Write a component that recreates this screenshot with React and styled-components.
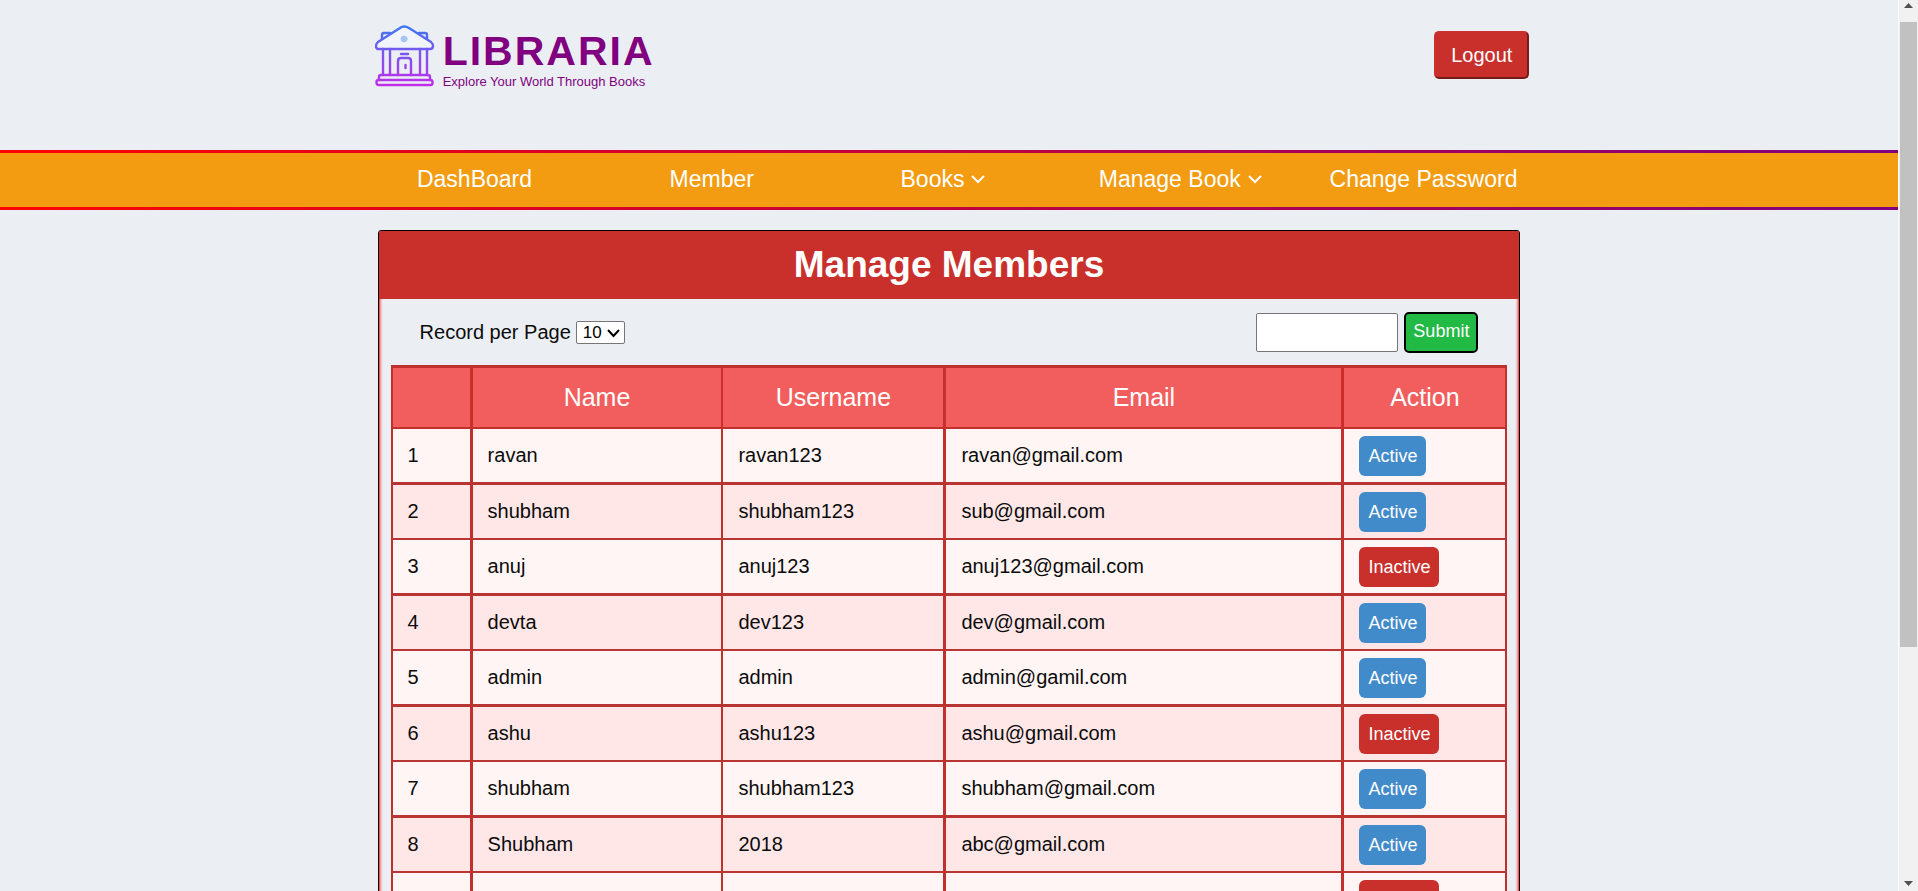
import React from "react";
import styled, { createGlobalStyle } from "styled-components";

const Global = createGlobalStyle`
  * { box-sizing: border-box; }
  body {
    margin: 0;
    background: #ebeff4;
    color: #0b0b0b;
    font-family: "Liberation Sans", Arial, sans-serif;
    font-size: 20px;
    line-height: 24px;
  }
`;

const Shell = styled.div`
  display: flex;
  height: 100vh;
  overflow: hidden;
`;

const Page = styled.div`
  flex: 1;
  min-width: 0;
  overflow: hidden;
`;

const Header = styled.header`
  display: flex;
  justify-content: space-between;
  align-items: flex-start;
  width: 62%;
  min-height: 150px;
  margin: 0 auto;
  padding: 25px 8px 0 14px;
`;

const Brand = styled.a`
  display: flex;
  gap: 8px;
  color: #800080;
  text-decoration: none;
`;

const BrandIcon = styled.svg`
  width: 60px;
  height: 62px;
`;

const BrandText = styled.div`
  display: flex;
  flex-direction: column;
  padding-top: 4px;
`;

const BrandName = styled.span`
  font-size: 41px;
  font-weight: bold;
  line-height: 45px;
  letter-spacing: 2px;
`;

const Tagline = styled.span`
  font-size: 13px;
  line-height: 16px;
`;

const Logout = styled.button`
  height: 48px;
  margin-top: 6px;
  padding: 0 15px;
  border: 2px outset #c9302c;
  border-radius: 5px;
  background: #c9302c;
  color: #fff;
  font: 20px "Liberation Sans", Arial, sans-serif;
`;

const NavBar = styled.nav`
  border: solid;
  border-width: 3px 0;
  border-image: linear-gradient(to right, red, purple) 1;
  background: #f39c12;
`;

const NavList = styled.ul`
  display: grid;
  grid-template-columns: repeat(5, 1fr);
  width: 62.5%;
  margin: 0 auto;
  padding: 0;
  list-style: none;
`;

const NavLink = styled.a`
  display: flex;
  align-items: center;
  justify-content: center;
  gap: 7px;
  height: 54px;
  padding-right: ${(p) => (p.$menu ? "12px" : "0")};
  padding-bottom: 2px;
  color: #fff;
  font-size: 23px;
  text-decoration: none;
  white-space: nowrap;
`;

const Chevron = styled.svg`
  width: 14px;
  height: 14px;
`;

const Card = styled.main`
  box-sizing: content-box;
  width: 60%;
  margin: 20px auto;
  padding: 0 1px;
  border: 1px solid #000;
  border-radius: 3px;
  box-shadow: inset 0 0 3px 1px red;
`;

const Title = styled.h1`
  margin: 0 -1px;
  padding: 12px 0;
  border-radius: 2px 2px 0 0;
  background: #c9302c;
  color: #fff;
  font-size: 37px;
  line-height: 44px;
  text-align: center;
`;

const Toolbar = styled.div`
  display: flex;
  justify-content: space-between;
  align-items: center;
  height: 66px;
  padding: 0 40px;
`;

const PageSize = styled.label`
  display: flex;
  align-items: center;
  gap: 5px;
`;

const SelectBox = styled.span`
  position: relative;
  display: flex;
`;

const Select = styled.select`
  appearance: none;
  width: 49px;
  height: 23px;
  padding: 0 18px 0 6px;
  border: 1px solid #767676;
  border-radius: 2px;
  background: #fff;
  color: #000;
  font: 17px "Liberation Sans", Arial, sans-serif;
`;

const SelectArrow = styled.svg`
  position: absolute;
  top: 6px;
  right: 5px;
  width: 13px;
  height: 12px;
  pointer-events: none;
`;

const Search = styled.form`
  display: flex;
  align-items: center;
  gap: 6px;
`;

const SearchInput = styled.input`
  width: 142px;
  height: 39px;
  padding: 0 8px;
  border: 1px solid #767676;
  border-radius: 2px;
  background: #fff;
  font: 18px "Liberation Sans", Arial, sans-serif;
`;

const Submit = styled.button`
  height: 41px;
  padding: 0 7px 1px;
  border: 2px solid #000;
  border-radius: 5px;
  background: #20ba44;
  color: #fff;
  font: 18px "Liberation Sans", Arial, sans-serif;
`;

const TableArea = styled.div`
  padding: 0 11px 12px;
`;

const Table = styled.table`
  width: 100%;
  table-layout: fixed;
  border-spacing: 0;
  border-top: 3px solid #c0302c;
  border-left: 2px solid #c0302c;
`;

const Th = styled.th`
  width: ${(p) => p.$width};
  height: 61px;
  padding: 0 0 2px;
  border-right: ${(p) => p.$edge}px solid #c9302c;
  border-bottom: 2px solid #c0302c;
  background: #f25e5e;
  color: #fff;
  font-size: 25px;
  font-weight: normal;
`;

const Row = styled.tr`
  background: #fff5f4;
  > td { border-bottom: 3px solid #b93531; }
  &:nth-child(even) { background: #ffe7e7; }
  &:nth-child(even) > td { border-bottom-width: 2px; }
`;

const Td = styled.td`
  padding: 6px 15px 8px;
  border-right: ${(p) => p.$edge}px solid #c0302c;
`;

const ActionTd = styled(Td)`
  padding: 7px 15px 6px;
`;

const Status = styled.button`
  display: block;
  height: 40px;
  padding: 0 9px;
  border: 0;
  border-radius: 6px;
  background: ${(p) => (p.$active ? "#428bca" : "#c9302c")};
  color: #fff;
  font: 18px "Liberation Sans", Arial, sans-serif;
`;

const ScrollTrack = styled.div`
  display: flex;
  flex-direction: column;
  align-items: center;
  width: 20px;
  padding: 0 1px;
  border-left: 1px solid #fafafa;
  background: #f1f1f1;
`;

const ScrollArrow = styled.svg`
  width: 17px;
  height: 22px;
  fill: #505050;
`;

const ScrollThumb = styled.div`
  flex: 625;
  align-self: stretch;
  background: #c1c1c1;
`;

const ScrollRest = styled.div`
  flex: 222;
`;

const links = [
  { label: "DashBoard" },
  { label: "Member" },
  { label: "Books", menu: true },
  { label: "Manage Book", menu: true },
  { label: "Change Password" },
];

const columns = [
  { label: "", width: "80px", edge: 3 },
  { label: "Name", width: "22.5%", edge: 2 },
  { label: "Username", width: "20%", edge: 3 },
  { label: "Email", width: "auto", edge: 3 },
  { label: "Action", width: "163px", edge: 2 },
];

const members = [
  ["ravan", "ravan123", "ravan@gmail.com", true],
  ["shubham", "shubham123", "sub@gmail.com", true],
  ["anuj", "anuj123", "anuj123@gmail.com", false],
  ["devta", "dev123", "dev@gmail.com", true],
  ["admin", "admin", "admin@gamil.com", true],
  ["ashu", "ashu123", "ashu@gmail.com", false],
  ["shubham", "shubham123", "shubham@gmail.com", true],
  ["Shubham", "2018", "abc@gmail.com", true],
  ["", "", "", false],
];

function LibraryIcon() {
  return (
    <BrandIcon viewBox="0 0 60 62" fill="none" stroke="url(#brand)" strokeWidth="2.4" strokeLinejoin="round" strokeLinecap="round" aria-hidden="true">
      <defs>
        <linearGradient id="brand" gradientUnits="userSpaceOnUse" x1="0" y1="0" x2="0" y2="62">
          <stop offset="0" stopColor="#3b78f0" />
          <stop offset="0.5" stopColor="#8152f0" />
          <stop offset="1" stopColor="#c42be8" />
        </linearGradient>
      </defs>
      <path d="M15 8H9Q7 8 7 10V15M44 8H50Q52 8 52 10V15" />
      <path d="M25 3Q29 0 34 3L56 17Q58 19 58 21Q58 24 55 24H4Q1 24 1 21Q1 19 3 17Z" fill="#f1f5fb" />
      <circle cx="29" cy="14" r="3" fill="#a9c5f5" stroke="#a9c5f5" strokeWidth="1" />
      <path d="M8 24V50M15 24V50M45 24V50M52 24V50" />
      <path d="M26 29H33M23 50V36Q23 33 26 33H33Q36 33 36 36V50" />
      <path d="M30.500 40V43" />
      <path d="M4 55V52Q4 50 6 50H53Q55 50 55 52V55" />
      <rect x="1.500" y="55" width="56" height="5" rx="2" />
    </BrandIcon>
  );
}

export default function App() {
  return (
    <Shell>
      <Global />
      <Page>
        <Header>
          <Brand href="#">
            <LibraryIcon />
            <BrandText>
              <BrandName>LIBRARIA</BrandName>
              <Tagline>Explore Your World Through Books</Tagline>
            </BrandText>
          </Brand>
          <Logout type="button">Logout</Logout>
        </Header>
        <NavBar>
          <NavList>
            {links.map((l) => (
              <li key={l.label}>
                <NavLink href="#" $menu={l.menu}>
                  {l.label}
                  {l.menu && (
                    <Chevron viewBox="0 0 14 14" fill="none" stroke="#fff" strokeWidth="2" aria-hidden="true">
                      <path d="M1 4L7 10L13 4" />
                    </Chevron>
                  )}
                </NavLink>
              </li>
            ))}
          </NavList>
        </NavBar>
        <Card>
          <Title>Manage Members</Title>
          <Toolbar>
            <PageSize>
              Record per Page
              <SelectBox>
                <Select defaultValue="10">
                  <option>10</option>
                  <option>25</option>
                  <option>50</option>
                </Select>
                <SelectArrow viewBox="0 0 13 12" fill="none" stroke="#000" strokeWidth="2" aria-hidden="true">
                  <path d="M1 3L6.500 9L12 3" />
                </SelectArrow>
              </SelectBox>
            </PageSize>
            <Search onSubmit={(e) => e.preventDefault()}>
              <SearchInput type="text" aria-label="Search members" />
              <Submit type="submit">Submit</Submit>
            </Search>
          </Toolbar>
          <TableArea>
            <Table>
              <thead>
                <tr>
                  {columns.map((c) => (
                    <Th key={c.label} $width={c.width} $edge={c.edge} scope="col">{c.label}</Th>
                  ))}
                </tr>
              </thead>
              <tbody>
                {members.map(([name, user, email, active], i) => (
                  <Row key={i}>
                    <Td $edge={3}>{i + 1}</Td>
                    <Td $edge={2}>{name}</Td>
                    <Td $edge={3}>{user}</Td>
                    <Td $edge={3}>{email}</Td>
                    <ActionTd $edge={2}>
                      <Status type="button" $active={active}>{active ? "Active" : "Inactive"}</Status>
                    </ActionTd>
                  </Row>
                ))}
              </tbody>
            </Table>
          </TableArea>
        </Card>
      </Page>
      <ScrollTrack aria-hidden="true">
        <ScrollArrow viewBox="0 0 17 22"><path d="M4 8L8.500 3L13 8Z" /></ScrollArrow>
        <ScrollThumb />
        <ScrollRest />
        <ScrollArrow viewBox="0 0 17 22"><path d="M4 12H13L8.500 17Z" /></ScrollArrow>
      </ScrollTrack>
    </Shell>
  );
}
